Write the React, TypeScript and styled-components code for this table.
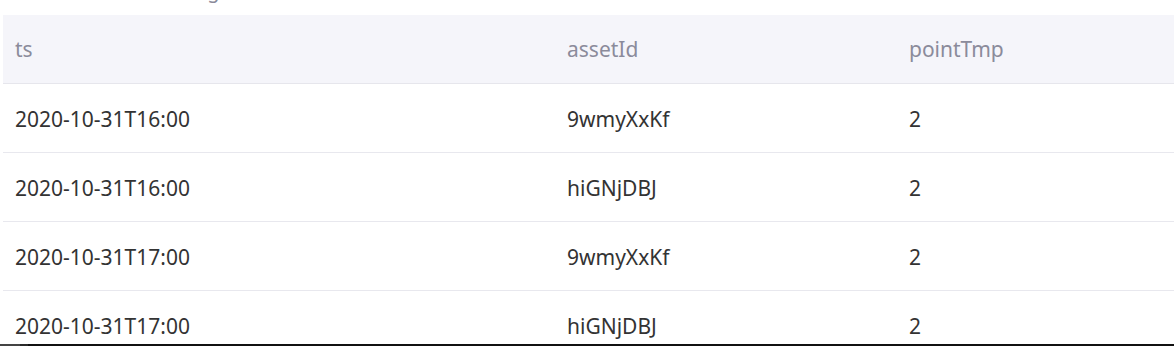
import React from 'react';
import styled, { createGlobalStyle } from 'styled-components';

const GlobalStyle = createGlobalStyle`
  html, body {
    margin: 0;
    padding: 0;
    background: #ffffff;
    overflow: hidden;
  }
  body {
    font-family: "Noto Sans", "Open Sans", "Noto Sans CJK SC", sans-serif;
  }
`;

// ── Layout ────────────────────────────────────────────────────────────────

const Page = styled.div`
  height: 346px;
  overflow: hidden;
  padding: 0 0 0 3px;
  box-sizing: border-box;
`;

const Caption = styled.div`
  height: 15px;
  overflow: hidden;
  padding-left: 192px;
`;

const CaptionText = styled.span`
  display: block;
  margin-top: -19px;
  font-size: 20px;
  line-height: 20px;
  color: #8a8a9a;
`;

const Table = styled.table`
  width: 100%;
  border-collapse: collapse;
  table-layout: fixed;
`;

const HeadCell = styled.th<{ $width?: number }>`
  width: ${({ $width }) => ($width ? `${$width}px` : 'auto')};
  height: 68px;
  padding: 0 12px;
  background: #f5f5fa;
  border-bottom: 1px solid #e6e6ec;
  text-align: left;
  font-weight: 400;
  font-size: 21px;
  color: #8b8b9b;
  box-sizing: border-box;
`;

const Cell = styled.td`
  height: 69px;
  padding: 3px 12px 0;
  border-bottom: 1px solid #e8e8ee;
  font-size: 21px;
  color: #333333;
  white-space: nowrap;
  box-sizing: border-box;
`;

const ScrollBar = styled.div`
  position: fixed;
  left: 0;
  right: 0;
  bottom: 0;
  height: 2px;
  background: linear-gradient(to right, #444 0, #444 20px, #2a2a2a 20px, #2a2a2a 28px, #111 28px);
`;

// ── Data ──────────────────────────────────────────────────────────────────

const rows = [
  { ts: '2020-10-31T16:00', assetId: '9wmyXxKf', pointTmp: 2 },
  { ts: '2020-10-31T16:00', assetId: 'hiGNjDBJ', pointTmp: 2 },
  { ts: '2020-10-31T17:00', assetId: '9wmyXxKf', pointTmp: 2 },
  { ts: '2020-10-31T17:00', assetId: 'hiGNjDBJ', pointTmp: 2 },
];

const App: React.FC = () => (
  <>
    <GlobalStyle />
    <Page>
      <Caption>
        <CaptionText>ng</CaptionText>
      </Caption>
      <Table>
        <thead>
          <tr>
            <HeadCell $width={552}>ts</HeadCell>
            <HeadCell $width={342}>assetId</HeadCell>
            <HeadCell>pointTmp</HeadCell>
          </tr>
        </thead>
        <tbody>
          {rows.map((r, i) => (
            <tr key={i}>
              <Cell>{r.ts}</Cell>
              <Cell>{r.assetId}</Cell>
              <Cell>{r.pointTmp}</Cell>
            </tr>
          ))}
        </tbody>
      </Table>
    </Page>
    <ScrollBar />
  </>
);

export default App;
